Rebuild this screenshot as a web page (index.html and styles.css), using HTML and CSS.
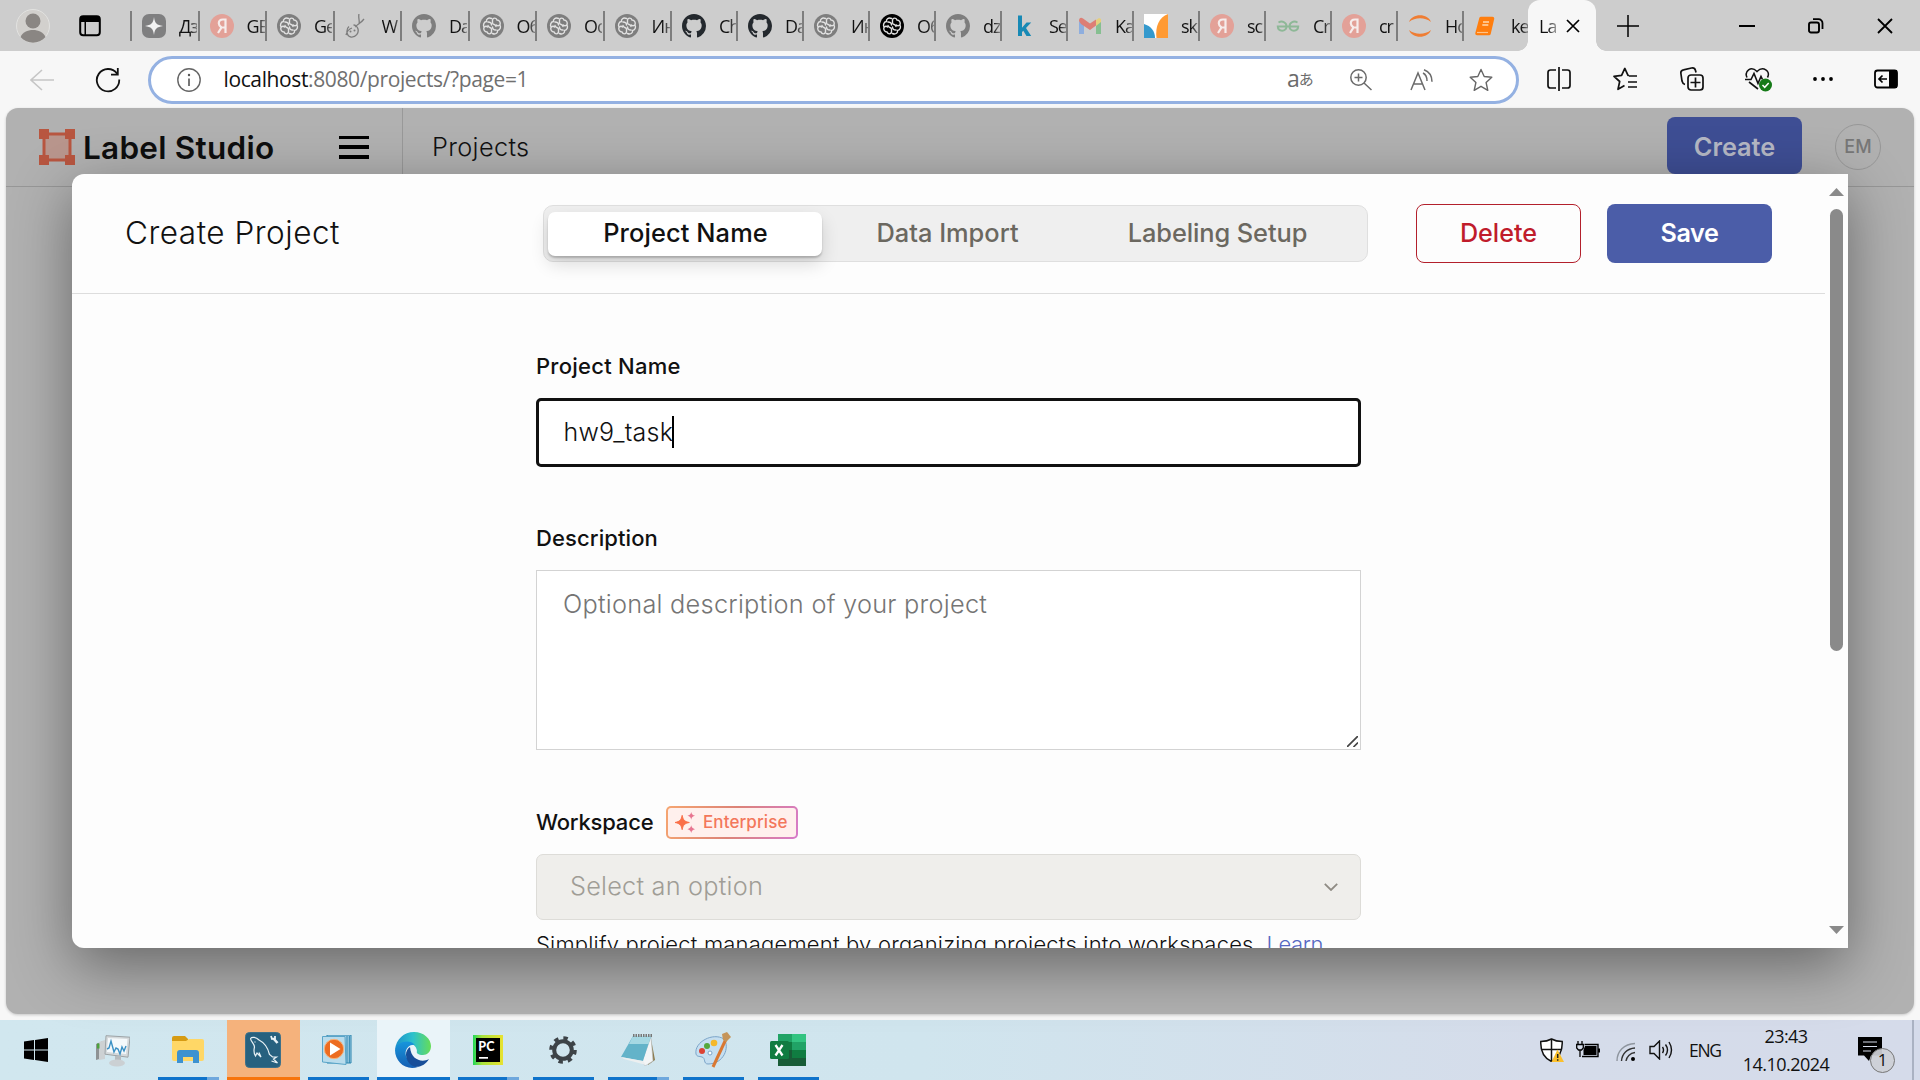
FILE: index.html
```html
<!DOCTYPE html>
<html lang="en">
<head>
<meta charset="utf-8">
<title>Label Studio</title>
<link rel="stylesheet" href="styles.css">
</head>
<body>
<svg class="defs" width="0" height="0">
  <symbol id="i-spark" viewBox="0 0 24 24"><rect width="24" height="24" rx="7" fill="#7f7f80"/><path d="M12 3c.9 6.300 2.700 8.100 9 9-6.300.9-8.100 2.700-9 9-.9-6.300-2.700-8.100-9-9 6.300-.9 8.100-2.700 9-9z" fill="#f2f2f2"/></symbol>
  <symbol id="i-ya" viewBox="0 0 24 24"><circle cx="12" cy="12" r="12" fill="#e3a198"/><path d="M15.500 19V5.500h-2.500c-2.800 0-4.200 1.500-4.200 3.800 0 2 1 3 2.700 4.200L8 19M15.500 13.500h-3" fill="none" stroke="#f6eceb" stroke-width="2.200"/></symbol>
  <symbol id="i-brain" viewBox="0 0 24 24"><circle cx="12" cy="12" r="12"/><g fill="none" stroke="#e2e2e2" stroke-width="1.400" stroke-linecap="round"><path d="M11.500 4.500C8 3 6 5.500 6.500 7.500 3.500 8 3 11 4 13c-1 3 1 5 3 5 1 2.500 4 2.500 4.500 0V15c0-2-3.500-1-3.500-3.500M12.500 19.500c3.500 1.500 5.500-1 5-3 3-.5 3.500-3.500 2.500-5.500 1-3-1-5-3-5-1-2.500-4-2.500-4.500 0v3c0 2 3.500 1 3.500 3.500M8 8c2 0 3.500 1 3.500 3M16 16c-2 0-3.500-1-3.500-3M4.500 13c1-1 2-1 3 0M19.500 11c-1 1-2 1-3 0"/></g></symbol>
  <symbol id="i-loop" viewBox="0 0 24 24"><g fill="none" stroke="#7d7d7d" stroke-width="1.300"><path d="M4 12.500C1 15 1 22 6 23c5 .5 8-4 7-8-.5-2-2.500-4-4.500-4M1 21c1-4 3-6 6-7M10 13c3-3 6-4 9-8M14 0c-1 4 1 7 0 10"/></g><circle cx="5.500" cy="17.500" r="1" fill="#7d7d7d"/><circle cx="9.500" cy="16.500" r="1" fill="#7d7d7d"/></symbol>
  <symbol id="i-gh" viewBox="0 0 16 16"><path d="M8 0C3.580 0 0 3.580 0 8c0 3.540 2.290 6.530 5.470 7.590.4.070.55-.17.55-.38 0-.19-.01-.82-.01-1.490-2.010.37-2.530-.49-2.690-.94-.09-.23-.48-.94-.82-1.130-.28-.15-.68-.52-.01-.53.63-.01 1.080.58 1.230.82.72 1.210 1.870.87 2.330.66.07-.52.28-.87.51-1.070-1.780-.2-3.640-.89-3.640-3.950 0-.87.31-1.590.82-2.150-.08-.2-.36-1.020.08-2.120 0 0 .67-.21 2.200.82.640-.18 1.320-.27 2-.27s1.360.09 2 .27c1.530-1.040 2.200-.82 2.200-.82.440 1.100.16 1.920.08 2.120.51.560.82 1.270.82 2.150 0 3.070-1.870 3.750-3.650 3.950.29.25.54.73.54 1.480 0 1.070-.01 1.930-.01 2.200 0 .21.15.46.55.38A8.010 8.010 0 0 0 16 8c0-4.420-3.580-8-8-8z"/></symbol>
  <symbol id="i-k" viewBox="0 0 24 24"><path d="M6 1.500h4v12.200L14.500 8.500h4.700l-5.200 5.500 5.200 8h-4.700l-3.200-5.300-1.300 1.300v4H6z" fill="#1789b5"/></symbol>
  <symbol id="i-gmail" viewBox="0 0 24 24"><path d="M1 7l5 3v10H1z" fill="#8eaede"/><path d="M18 10l5-3v13h-5z" fill="#86bf91"/><path d="M18 6l3-2 2 1v3l-5 4z" fill="#e6cf7d"/><path d="M1 7c0-3 2-4 4-2.500l7 5 6-4v6l-6 4.500L3 10z" fill="#dd7e75"/></symbol>
  <symbol id="i-sk" viewBox="0 0 24 24"><path d="M0 0h24v24H0z" fill="#fff"/><path d="M0 10c7 2 11 7 11 14H0z" fill="#3499cd"/><path d="M24 0v24H12.500C11 13 15 3 24 0z" fill="#ff9a33"/></symbol>
  <symbol id="i-gfg" viewBox="0 0 24 24"><g fill="none" stroke="#8eb897" stroke-width="2"><path d="M2.500 8.500C6 6.500 10.500 8 10.500 12.500 10.500 18 2 18 1.800 12.500H22.200C22 18 13.500 18 13.500 12.500 13.500 8 18 6.500 21.500 8.500"/></g></symbol>
  <symbol id="i-jup" viewBox="0 0 24 24"><path d="M1 8C4-1 20-1 23 8 17 3 7 3 1 8zM1 16c3 9 19 9 22 0-6 5-16 5-22 0z" fill="#ef7d33"/></symbol>
  <symbol id="i-book" viewBox="0 0 24 24"><path d="M7 4.500h11.500l-3.500 15H3z" fill="#ff7e0e" stroke="#ff7e0e" stroke-width="3.500" stroke-linejoin="round"/><path d="M9 8h6M8.300 11h6" stroke="#ffd9ae" fill="none" stroke-width="1.300"/><path d="M3 18.500h11" stroke="#ffc489" stroke-width="1.200"/></symbol>
</svg>

<div class="screen">
  <div class="tabstrip">
    <svg class="avatar" viewBox="0 0 34 34"><circle cx="17" cy="17" r="16.500" fill="#d2d0cd" stroke="#e2e2e0"/><circle cx="17" cy="12" r="7.500" fill="#8a8683"/><path d="M4.500 28C8 18.500 26 18.500 29.500 28 23 35.500 11 35.500 4.500 28z" fill="#8a8683"/></svg>
    <svg class="workspaces" viewBox="0 0 22 22"><rect x="1.200" y="1.200" width="19.600" height="19" rx="3" fill="none" stroke="#000" stroke-width="2"/><path d="M1 2h20v5H1zM5.500 6h1.500v14H5.500z"/></svg>
    <div class="tabs">
      <div class="tab"><svg><use href="#i-spark"/></svg><span>Дз</span></div>
      <div class="tab"><svg><use href="#i-ya"/></svg><span>GE</span></div>
      <div class="tab grey"><svg><use href="#i-brain"/></svg><span>Ge</span></div>
      <div class="tab"><svg><use href="#i-loop"/></svg><span>W</span></div>
      <div class="tab grey"><svg><use href="#i-gh"/></svg><span>Da</span></div>
      <div class="tab grey"><svg><use href="#i-brain"/></svg><span>Об</span></div>
      <div class="tab grey"><svg><use href="#i-brain"/></svg><span>Ос</span></div>
      <div class="tab grey"><svg><use href="#i-brain"/></svg><span>Ин</span></div>
      <div class="tab slim dark"><svg><use href="#i-gh"/></svg><span>Ch</span></div>
      <div class="tab slim dark"><svg><use href="#i-gh"/></svg><span>Da</span></div>
      <div class="tab slim grey"><svg><use href="#i-brain"/></svg><span>Ин</span></div>
      <div class="tab slim"><svg><use href="#i-brain"/></svg><span>Об</span></div>
      <div class="tab slim grey"><svg><use href="#i-gh"/></svg><span>dz</span></div>
      <div class="tab slim"><svg><use href="#i-k"/></svg><span>Se</span></div>
      <div class="tab slim"><svg><use href="#i-gmail"/></svg><span>Ka</span></div>
      <div class="tab slim"><svg><use href="#i-sk"/></svg><span>sk</span></div>
      <div class="tab slim"><svg><use href="#i-ya"/></svg><span>sc</span></div>
      <div class="tab slim"><svg><use href="#i-gfg"/></svg><span>Cr</span></div>
      <div class="tab slim"><svg><use href="#i-ya"/></svg><span>cr</span></div>
      <div class="tab slim"><svg><use href="#i-jup"/></svg><span>Ho</span></div>
      <div class="tab slim last"><svg><use href="#i-book"/></svg><span>ke</span></div>
    </div>
    <div class="tab-active"><span>La</span><svg viewBox="0 0 14 14"><path d="M1 1l12 12M13 1L1 13" stroke="#000" stroke-width="1.700"/></svg></div>
    <svg class="newtab" viewBox="0 0 22 22"><path d="M11 0v22M0 11h22" stroke="#000" stroke-width="1.500"/></svg>
    <div class="winctl">
      <svg width="16" height="16" viewBox="0 0 16 16"><path d="M0 8h16" stroke="#000" stroke-width="2"/></svg>
      <svg width="16" height="16" viewBox="0 0 16 16"><rect x="1" y="4.500" width="10" height="10" rx="2" fill="none" stroke="#000" stroke-width="1.900"/><path d="M5 1.200h5.500a4 4 0 0 1 4 4V11" fill="none" stroke="#000" stroke-width="1.800"/></svg>
      <svg width="16" height="16" viewBox="0 0 16 16"><path d="M1 1l14 14M15 1L1 15" stroke="#000" stroke-width="1.800"/></svg>
    </div>
  </div>

  <div class="toolbar">
    <svg class="back" viewBox="0 0 24 22"><path d="M24 11H1M12 1L1 11l11 10" fill="none" stroke="#c6c6c6" stroke-width="1.600"/></svg>
    <svg class="reload" viewBox="0 0 26 26"><path d="M22 6.500A11.200 11.200 0 1 0 24.200 12.500M22.800 1v6.700H16" fill="none" stroke="#111" stroke-width="1.800"/></svg>
    <div class="address">
      <svg class="info" viewBox="0 0 24 24"><circle cx="12" cy="12" r="11.200" fill="none" stroke="#666" stroke-width="1.400"/><path d="M12 10.500v7.500" stroke="#555" stroke-width="1.600"/><circle cx="12" cy="7" r="1.200" fill="#555"/></svg>
      <div class="url">localhost<span>:8080/projects/?page=1</span></div>
      <div class="translate">a<span>あ</span></div>
      <svg class="zoomin" viewBox="0 0 22 22"><g fill="none" stroke="#6b6b6b" stroke-width="1.500"><circle cx="8.500" cy="8.500" r="7.700"/><path d="M14 14l7.500 7M8.500 4.500v8M4.500 8.500h8"/></g></svg>
      <svg class="read" viewBox="0 0 24 22"><g fill="none" stroke="#6b6b6b" stroke-width="1.500"><path d="M1 21L8 4l7 17M3.500 15h9M13 4c2 1 4 4 4 8M14 .8c4 1.500 8 5 8 12"/></g></svg>
      <svg class="star" viewBox="0 0 24 24"><path d="M12 1.500l3.200 7 7.600.8-5.700 5.200 1.700 7.800-6.800-4-6.800 4 1.700-7.800L1.200 9.300l7.600-.8z" fill="none" stroke="#666" stroke-width="1.400" stroke-linejoin="round"/></svg>
    </div>
    <div class="actions">
      <svg viewBox="0 0 24 24"><path d="M9 3H3.500C2 3 1 4 1 5.500v13C1 20 2 21 3.500 21H9M15 3h5.500C22 3 23 4 23 5.500v13c0 1.500-1 2.500-2.500 2.500H15M12 0v24" fill="none" stroke="#111" stroke-width="1.700"/></svg>
      <svg viewBox="0 0 24 24"><path d="M16 8.500l-1-.1-3.200-7-3.200 7-7.600.9 5.700 5.200-1.700 7.800 6.500-3.800M16 9h8M15 15h9M15 20h9" fill="none" stroke="#111" stroke-width="1.700" stroke-linejoin="round"/></svg>
      <svg viewBox="0 0 24 24"><g fill="none" stroke="#111" stroke-width="1.700"><rect x="8" y="8" width="15" height="15" rx="3"/><path d="M15.500 10.500v10M10.500 15.500h10M5 17.500C3 17 2.500 16 2 14L.9 6.500C.6 4.500 1.500 3.200 3.500 2.800l8-1.800c2-.4 3.500.5 4 2.500l.5 2"/></g></svg>
      <svg class="heart" viewBox="0 0 27 25"><path d="M2 10.500C-1 4 6-1.500 12 4.500 18-1.500 26 4 22.500 10.500M0 12.500h6l3-6 4 10 3-7 1.500 3M4 15l9 7" fill="none" stroke="#111" stroke-width="1.600"/><circle cx="20.500" cy="18" r="6.500" fill="#157a17"/><path d="M17.500 18l2.200 2.300 4-4.300" fill="none" stroke="#fff" stroke-width="1.500"/></svg>
      <svg viewBox="0 0 24 24"><circle cx="4" cy="12" r="1.900"/><circle cx="12" cy="12" r="1.900"/><circle cx="20" cy="12" r="1.900"/></svg>
      <svg class="side" viewBox="0 0 24 24"><rect x="1" y="3.500" width="22" height="17" rx="2.500" fill="none" stroke="#000" stroke-width="1.800"/><path d="M15 3h8v18h-8z"/><path d="M13 12H5.500M8.500 8.500L5 12l3.500 3.500" fill="none" stroke="#000" stroke-width="1.700"/></svg>
    </div>
  </div>

  <div class="viewport">
    <div class="app">
      <div class="topbar">
        <svg class="mark" viewBox="0 0 36 36"><path d="M5 5h26v26H5z" fill="#b9968d"/><path d="M5 5h26v26H5z" fill="none" stroke="#b85640" stroke-width="3"/><path d="M0 0h10v10H0zM26 0h10v10H26zM0 26h10v10H0zM26 26h10v10H26z" fill="#b85640"/></svg>
        <div class="brand">Label Studio</div>
        <div class="burger"><i></i><i></i><i></i></div>
        <div class="crumb">Projects</div>
        <div class="create">Create</div>
        <div class="user">EM</div>
      </div>
    </div>

    <div class="modal">
      <div class="content">
        <div class="mhead">
          <div class="title">Create Project</div>
          <div class="steps"><div class="step on">Project Name</div><div class="step s2">Data Import</div><div class="step s3">Labeling Setup</div></div>
          <div class="btn del">Delete</div>
          <div class="btn save">Save</div>
        </div>
        <div class="form">
          <div class="label l1">Project Name</div>
          <div class="input"><span>hw9_task</span><i class="caret"></i></div>
          <div class="label l2">Description</div>
          <div class="area">Optional description of your project<svg viewBox="0 0 11 11"><path d="M0 11L11 0M6.500 11L11 6.500" stroke="#444" stroke-width="1.700"/></svg></div>
          <div class="wsrow"><div class="label l3">Workspace</div>
            <div class="badge"><svg viewBox="0 0 22 22"><path d="M7.500 3.500c1 5 2.500 6.500 7.500 7.500-5 1-6.500 2.500-7.500 7.500C6.500 13.500 5 12 0 11c5-1 6.500-2.500 7.500-7.500z" fill="#fa7049" stroke="#fa7049"/><path d="M17 0c.5 2.500 1.500 3.500 4 4-2.500.5-3.500 1.500-4 4-.5-2.500-1.500-3.500-4-4 2.500-.5 3.500-1.500 4-4zM17 14c.5 2.500 1.500 3.500 4 4-2.500.5-3.500 1.500-4 4-.5-2.500-1.500-3.500-4-4 2.500-.5 3.500-1.500 4-4z" fill="#e87590"/></svg>Enterprise</div></div>
          <div class="select"><span>Select an option</span><svg viewBox="0 0 14 8"><path d="M.8.8L7 7 13.200.8" fill="none" stroke="#8f8b84" stroke-width="1.800"/></svg></div>
          <div class="hint">Simplify project management by organizing projects into workspaces. <a>Learn</a></div>
        </div>
      </div>
      <div class="scroll"><svg width="15" height="8" viewBox="0 0 15 8"><path d="M0 8L7.500 0 15 8z" fill="#8a8a8a"/></svg><div class="thumb"></div><svg width="15" height="8" viewBox="0 0 15 8"><path d="M0 0l7.500 8L15 0z" fill="#8a8a8a"/></svg></div>
    </div>
  </div>

  <div class="taskbar">
    <div class="task start"><svg width="24" height="24" viewBox="0 0 24 24"><path d="M0 3.500l10-1.400v9.400H0zM11 2l13-2v11.500H11zM0 12.500h10v9.400L0 20.500zM11 12.500h13V24l-13-2z"/></svg></div>
    <div class="task mon"><svg width="34" height="32" viewBox="0 0 34 32"><path d="M0 9l7-3v17l-7 2z" fill="#8e9294"/><path d="M3 7l6-2v19l-6 1z" fill="#cdd1d3"/><path d="M1 8.500h2.500v5H1z" fill="#4ca33d"/><path d="M10 .7l24 1.500-2 20-23-3z" fill="#d5dadc" stroke="#9da3a6"/><path d="M12 3l19.500 1-1.500 15-19-2z" fill="#f5f9fb"/><path d="M11 14l2-1 2-7 3 11 2-4 2 1 2 5 2-7 2 4 2-5" fill="none" stroke="#3b90c4" stroke-width="1.400"/><path d="M19 21h6v6h-6z" fill="#b6bbbe"/><ellipse cx="21" cy="28" rx="8" ry="3.500" fill="#cbd0d3"/></svg></div>
    <div class="task run more"><svg width="32" height="28" viewBox="0 0 32 28"><path d="M0 2q0-2 2-2h11l3 3v6H0z" fill="#d69b13"/><path d="M0 5h14l3-2h13q2 0 2 2v18q0 2-2 2H2q-2 0-2-2z" fill="#ffd766"/><path d="M5 27V17q0-3 3-3h16q3 0 3 3v10h-6v-6H11v6z" fill="#3d92d0"/></svg></div>
    <div class="task alert"><svg width="36" height="36" viewBox="0 0 36 36"><rect x=".5" y=".5" width="35" height="35" rx="4" fill="#27617f" stroke="#3e7088"/><g fill="none" stroke="#e9f2f6" stroke-width="1.200"><path d="M5.500 6.500C7 4.500 11 5 14 8c6 3 9 8 10.500 14.500l3 2.500h4l-3 2 4 4-6-2M5.500 6.500C6 10 9 11 9.500 15c-1 4-1 6 1 9l1.500-3 4 4-2-4.500M10 9.500v1"/><path d="M28.500 6.500l4 4.500" stroke-width="2.600"/><path d="M26 4l1 3 3-.5V4" stroke-width="1.800"/></g></svg></div>
    <div class="task run wmp"><svg width="30" height="30" viewBox="0 0 30 30"><path d="M5 0h24v28H5z" fill="#a4d1e8" stroke="#2a83ad"/><path d="M25 1v27M27.300 1v27" stroke="#2a83ad"/><path d="M.5 1.500h22.500l1 28L.5 27z" fill="#b9dcec" stroke="#5aa5c8"/><circle cx="12" cy="14" r="9.700" fill="#ed6c20" stroke="#f6b27a"/><path d="M8 7.500v13l10.500-6.500z" fill="#fff"/></svg></div>
    <div class="task focus"><svg width="36" height="36" viewBox="0 0 36 36"><defs><linearGradient id="eg"><stop stop-color="#1c91cc"/><stop offset=".5" stop-color="#2dc1cc"/><stop offset="1" stop-color="#66dd57"/></linearGradient><linearGradient id="eb" x2="0" y2="1"><stop stop-color="#1796dc"/><stop offset="1" stop-color="#155eb3"/></linearGradient></defs><path d="M0 18C1 7 9 0 19 0c10 0 17 7 17 14 0 6-4 9-8 9-5 0-7-2-6-4C21 9 6 8 0 18z" fill="url(#eg)"/><path d="M0 18C2 9 15 7 20 13c-5-1-11 4-9 11 2 6 7 9 12 11C11 39 0 30 0 18z" fill="url(#eb)"/><path d="M15 15c-6 4-5 13 1 18 6 4 14 1 18-6-7 4-18 1-19-12z" fill="#174e99"/></svg></div>
    <div class="task run more pc"><svg width="30" height="30" viewBox="0 0 30 30"><defs><linearGradient id="pg"><stop stop-color="#21d759"/><stop offset=".3" stop-color="#a8e23e"/><stop offset="1" stop-color="#e8e230"/></linearGradient></defs><path d="M0 0h30v30H0z" fill="url(#pg)"/><path d="M3 3h24v24H3z"/><path d="M6 22h9v1.700H6z" fill="#fff"/><text x="5.300" y="15.500" font-family="Lato" font-weight="900" font-size="12.500" fill="#fff">PC</text></svg></div>
    <div class="task run"><svg width="28" height="28" viewBox="0 0 28 28"><g stroke="#3d4347"><circle cx="14" cy="14" r="8.800" fill="none" stroke-width="4"/><circle cx="14" cy="14" r="12" fill="none" stroke-width="3.600" stroke-dasharray="4.400 5.025"/></g></svg></div>
    <div class="task run more"><svg width="34" height="32" viewBox="0 0 34 32"><path d="M30 5l4 21-7 5z" fill="#8d7a4b"/><path d="M30 3l2 24-8 5-3-5z" fill="#f3f5f6" stroke="#b6bec2" stroke-width=".6"/><path d="M12 2h18l-8 25-22-4z" fill="#63b3c9"/><path d="M12 2h18l-2.500 8L8 10z" fill="#a5d8e3"/><path d="M0 23l22 4 3 4L3 25z" fill="#eceff0"/><path d="M12 1.500h19" stroke="#777" stroke-width="3" stroke-dasharray="1.500 1"/></svg></div>
    <div class="task run"><svg width="36" height="36" viewBox="0 0 36 36"><path d="M1 22C-1 10 18 0 29 7c6 8 0 25-16 25-5 0-2-6-6-7-3-1-5 0-6-3z" fill="#c5dff1" stroke="#7ba4c8"/><circle cx="7" cy="19" r="3" fill="#dc4235"/><circle cx="12" cy="14" r="3" fill="#54a83c"/><circle cx="19" cy="11" r="3.300" fill="#f4b82c"/><circle cx="15" cy="21" r="2" fill="#fff" stroke="#7ba4c8"/><path d="M31 7L18 35" stroke="#d97832" stroke-width="3"/><path d="M27 2l5-2 4 5-5 5-3-2z" fill="#c59459"/></svg></div>
    <div class="task run xl"><svg width="36" height="32" viewBox="0 0 36 32"><path d="M8 0h28v32H8z" fill="#21a366"/><path d="M22 0h14v8H22z" fill="#33c481"/><path d="M8 8h14v8H8z" fill="#107c41"/><path d="M22 16h14v8H22z" fill="#107c41"/><path d="M8 16h14v16H8zM8 24h28v8H8z" fill="#185c37"/><rect y="7" width="19" height="18" rx="1.500" fill="#107c41"/><path d="M5.500 11l7 10.500M12.500 11l-7 10.500" stroke="#fff" stroke-width="2.300"/></svg></div>
    <div class="tray">
      <svg class="shield" width="24" height="24" viewBox="0 0 24 24"><path d="M11.500 1C8 3 5 3.500.8 3.500c-.5 10 2.500 16 10.700 20 8.200-4 11.200-10 10.700-20C18 3.500 15 3 11.500 1z" fill="#fff" stroke="#111" stroke-width="1.500"/><path d="M11.500 1v22M1 11.500h21" stroke="#111" stroke-width="1.500"/><path d="M17.500 11.500L24 24H11.500z" fill="#fbc02d"/><path d="M17.700 16v4M17.700 21.200v1.500" stroke="#222" stroke-width="1.500"/></svg>
      <svg class="batt" width="24" height="18" viewBox="0 0 24 18"><path d="M8.500 3.500H22v12H6" fill="none" stroke="#000" stroke-width="1.400"/><path d="M9 5h11.500v9H7.500V9zM22 7.500h2v4h-2z"/><path d="M2 0v3.500M6 0v3.500M.7 3.500h6.600V7L5.500 9h-3L.7 7zM4 9v7" fill="none" stroke="#000" stroke-width="1.300"/></svg>
      <svg class="wifi" width="20" height="20" viewBox="0 0 20 20"><g fill="none" stroke="#333" stroke-width="1.400"><path d="M1 19C1 9 8 2 19 1.500" stroke="#8e959e"/><path d="M5.500 19C6 12 11 6.500 19 6M10 19c.5-4 4-8 9-8.500"/></g><circle cx="17" cy="17" r="2"/></svg>
      <svg class="vol" width="24" height="20" viewBox="0 0 24 20"><path d="M1 6.500h4L10.500 1v18L5 13.500H1zM13.500 7q2 3 0 6M16.500 4.500q4 5.500 0 11M20 2q5 8 0 16" fill="none" stroke="#111" stroke-width="1.400"/></svg>
      <div class="lang">ENG</div>
      <div class="clock"><div class="time">23:43</div><div class="date">14.10.2024</div></div>
      <div class="notif"><svg width="24" height="24" viewBox="0 0 24 24"><path d="M0 0h24v18.500H13L11 24l-5-5.500H0z"/><path d="M5 5h14M5 9.500h14M5 14h8" stroke="#d5dbea" stroke-width="1.200"/></svg><div class="count">1</div></div>
    </div>
  </div>
</div>
</body>
</html>
```
FILE: styles.css
```css
*{box-sizing:border-box}
body{margin:0;background:#f7f7f7;overflow:hidden}
svg{display:block;flex:none}
.defs{position:absolute}
.screen{width:1920px;height:1080px;display:flex;flex-direction:column;font-family:Inter,sans-serif;font-weight:350;color:#111;white-space:nowrap;overflow:hidden}

/* Tab strip */
.tabstrip{height:51px;background:#cdcdcd;display:flex;align-items:center;font-family:"Open Sans",sans-serif;font-weight:400;flex:none}
.avatar{width:34px;height:34px;margin-left:16px}
.workspaces{width:22px;height:22px;margin-left:29px}
.tabs{display:flex;margin-left:29px;width:1398px;overflow:hidden}
.tab{width:67.5px;height:30px;border-left:2px solid #7e7e7e;display:flex;align-items:center;overflow:hidden;flex:none}
.tab.slim{width:66px}
.tab svg{width:24px;height:24px;margin-left:10px}
.tab span{margin-left:13px;font-size:18px;line-height:28px;width:18px;overflow:hidden;letter-spacing:-1px;color:#111;-webkit-mask-image:linear-gradient(90deg,#000 60%,rgba(0,0,0,.4))}
.tab.grey svg{fill:#7e7e7e}
.tab.dark svg{fill:#24292e}
.tab-active{position:relative;width:68px;height:51px;background:#f7f7f7;border-radius:12px 12px 0 0;display:flex;align-items:center;padding-left:11px;font-size:18px;color:#111}
.tab-active::before,.tab-active::after{content:"";position:absolute;bottom:0;width:10px;height:10px}
.tab-active::before{left:-10px;background:radial-gradient(circle at 0 0,transparent 9.500px,#f7f7f7 10px)}
.tab-active::after{right:-10px;background:radial-gradient(circle at 100% 0,transparent 9.500px,#f7f7f7 10px)}
.tab-active span{width:17px;overflow:hidden;letter-spacing:-1px;-webkit-mask-image:linear-gradient(90deg,#000 50%,rgba(0,0,0,.4))}
.tab-active svg{width:14px;height:14px;margin-left:10px}
.newtab{width:22px;height:22px;margin-left:21px}
.winctl{display:flex;gap:53px;margin-left:100px}

/* Toolbar */
.toolbar{height:57px;display:flex;align-items:center;background:#f7f7f7;flex:none}
.back{width:24px;height:22px;margin-left:30px}
.reload{width:26px;height:26px;margin-left:41px}
.address{width:1371px;height:48px;margin-left:27px;background:#fff;border:3px solid #94b1e2;border-radius:24px;display:flex;align-items:center}
.info{width:24px;height:24px;margin-left:26px}
.url{font:21px/26px "Open Sans",sans-serif;letter-spacing:-.38px;margin:-1px 0 0 22.500px;width:305.5px;color:#111}
.url span{color:#707070}
.translate{font:23px "Open Sans",sans-serif;color:#6b6b6b;margin:-4px 0 0 758px;width:26px;line-height:24px;display:flex;align-items:center}
.translate span{font:15px/14px "Noto Sans CJK JP",sans-serif;margin:3px 0 0 -1px}
.zoomin{width:22px;height:22px;margin-left:37px}
.read{width:24px;height:22px;margin-left:38px}
.star{width:24px;height:24px;margin-left:35px}
.actions{display:flex;gap:42.500px;margin-left:27.500px}
.actions svg{width:24px;height:24px}
.actions .heart{width:27px;height:25px;margin:0 -4px 0 -1px}
.actions .side{margin-left:-3px}

/* Page */
.viewport{position:relative;height:912px;padding:0 6px;flex:none}
.app{height:906px;border-radius:12px;background:#b1b1b1;overflow:hidden;box-shadow:0 1px 3px rgba(0,0,0,.2)}
.topbar{height:79px;border-bottom:1px solid #979797;display:flex;align-items:center}
.mark{width:36px;height:36px;margin-left:33px}
.brand{font-size:31.500px;font-weight:600;letter-spacing:.25px;margin:2px 0 0 8px;width:193px;line-height:40px;color:#0e0e0e}
.burger{width:30px;height:23px;margin-left:63px;display:flex;flex-direction:column;justify-content:space-between}
.burger i{height:3.500px;background:#000}
.crumb{height:78px;line-height:78px;border-left:1px solid #999;margin-left:33px;padding-left:29px;font-size:25.300px;letter-spacing:.35px;width:1265px}
.create{width:135px;height:57px;border-radius:8px;background:#3e4e94;color:#b5b8c4;font-weight:600;font-size:25.300px;line-height:60px;text-align:center;margin:-3px 0 0}
.user{width:46px;height:46px;border:1.500px solid #979797;border-radius:50%;margin-left:33px;font-size:18px;font-weight:500;color:#777;line-height:44px;text-align:center}

/* Modal dialog */
.modal{position:absolute;left:72px;top:66px;width:1776px;height:774px;background:#fdfdfd;border-radius:12px 0 0 12px;box-shadow:0 18px 60px rgba(0,0,0,.42);display:flex;overflow:hidden}
.content{width:1753px;height:774px;overflow:hidden}
.mhead{height:120px;border-bottom:1.500px solid #dddddd;display:flex;align-items:center;padding-left:53px}
.title{font-size:31.500px;letter-spacing:.52px;line-height:38px;margin-top:-1px;width:418px}
.steps{width:825px;height:57px;border:1.500px solid #dfdfdf;border-radius:10px;background:#efefef;display:flex;align-items:center;padding:0 4px;flex:none}
.step{width:271px;height:45px;line-height:44px;text-align:center;font-size:25.400px;font-weight:550;color:#6b6860;flex:none}
.step.s2{padding-right:20px}
.step.s3{padding-right:22px;letter-spacing:-.1px}
.step.on{width:274px;height:44px;line-height:42px;letter-spacing:.1px;padding-left:1px;background:#fff;border-radius:7px;color:#111;box-shadow:0 2px 2px rgba(0,0,0,.2),0 8px 18px rgba(0,0,0,.14)}
.btn{width:165px;height:59px;border-radius:8px;font-size:25.200px;font-weight:550;line-height:57px;text-align:center;flex:none}
.del{margin-left:48px;border:1.500px solid #b3202c;color:#c01c2b}
.save{margin-left:26px;background:#4b5da8;color:#fff;font-weight:600;letter-spacing:-.4px;line-height:59px}
.form{margin-left:464px;width:825px}
.label{font-size:22px;font-weight:500;line-height:30px;color:#111}
.l1{letter-spacing:.25px;margin-top:57px}
.input{height:69px;margin-top:16.500px;border:3px solid #111;border-radius:5px;background:#fff;display:flex;align-items:center;padding-left:24.500px;font-size:25px;letter-spacing:.25px}
.caret{width:2px;height:32px;background:#000;margin-left:-1px}
.l2{letter-spacing:.1px;margin-top:56.500px}
.area{position:relative;height:180px;margin-top:17px;border:1.500px solid #d3d3d3;background:#fff;font-size:25.350px;letter-spacing:.25px;line-height:32px;padding:17px 26px;color:#757575}
.area svg{position:absolute;right:2px;bottom:2px;width:11px;height:11px}
.wsrow{display:flex;align-items:center;margin-top:56px;height:33px}
.l3{letter-spacing:-.2px;width:130px;margin-top:-2px}
.badge{width:132px;height:33px;border:2px solid transparent;border-radius:5px;background:linear-gradient(#fff0ed,#fff0ed) padding-box,linear-gradient(110deg,#f6a671,#dc8377 50%,#d67bcb) border-box;color:#f3775b;font-size:17px;font-weight:550;letter-spacing:.1px;line-height:29px;display:flex;align-items:center;padding-left:7px}
.badge svg{width:21px;height:21px;margin-right:7px}
.select{height:66px;margin-top:15px;background:#efeeeb;border:1.500px solid #dddcd8;border-radius:7px;display:flex;align-items:center;justify-content:space-between;padding:0 22px 0 33px;font-size:25.300px;line-height:30px;letter-spacing:.22px;color:#a09d96}
.select span{margin-top:-2px}
.select svg{width:14px;height:8px}
.hint{font-size:22px;letter-spacing:.2px;line-height:32px;margin-top:8px}
.hint a{color:#5567c2;letter-spacing:-.4px}
.scroll{width:23px;display:flex;flex-direction:column;align-items:center;padding:14px 0 14px 0}
.thumb{width:13px;height:442px;border-radius:7px;background:#8a8a8a;margin:13px 0 275px}

/* Taskbar */
.taskbar{height:60px;background:linear-gradient(90deg,#d1e7ef,#d0e5ee 48%,#d5dcea 80%,#d5dbea);display:flex;flex:none;font-family:"Open Sans",sans-serif;font-weight:400}
.task{position:relative;width:61px;height:60px;margin-right:14px;display:flex;align-items:center;justify-content:center;border-bottom:3px solid transparent;padding:2px 2px 0 0;flex:none}
.start{margin-left:6px}
.mon{margin-right:14px;padding:4px 0 0 2px}
.mon + .task{margin-left:2px}
.run{border-color:#0f73cb}
.run.more::after{content:"";position:absolute;right:0;bottom:-3px;width:12px;height:3px;background:#6fa8dd}
.alert{width:73px;background:#f5b27c;border-color:#f7740c;margin:0 8px 0 -6px}
.wmp{margin-right:8px;padding-right:4px}
.focus{width:73px;background:#eaf4f9;border-color:#0f73cb;margin-right:8px}
.tray{flex:1;display:flex;align-items:center;border-right:2px solid #aab2c2;margin-right:6px;color:#111}
.shield{margin-left:707px}
.batt{margin-left:12px}
.wifi{margin-left:16px;margin-top:4px}
.vol{margin-left:13px}
.lang{font-size:17.500px;letter-spacing:-1.300px;margin-left:16px;width:34px}
.clock{width:90px;margin-left:18px;text-align:center;font-size:18px;letter-spacing:-.53px;line-height:28px}
.notif{position:relative;margin:-3px 0 0 27px}
.count{position:absolute;left:12px;top:11px;width:25px;height:25px;border:1.500px solid #777;border-radius:50%;background:rgba(205,208,214,.93);font-size:17px;line-height:22px;text-align:center}
```
